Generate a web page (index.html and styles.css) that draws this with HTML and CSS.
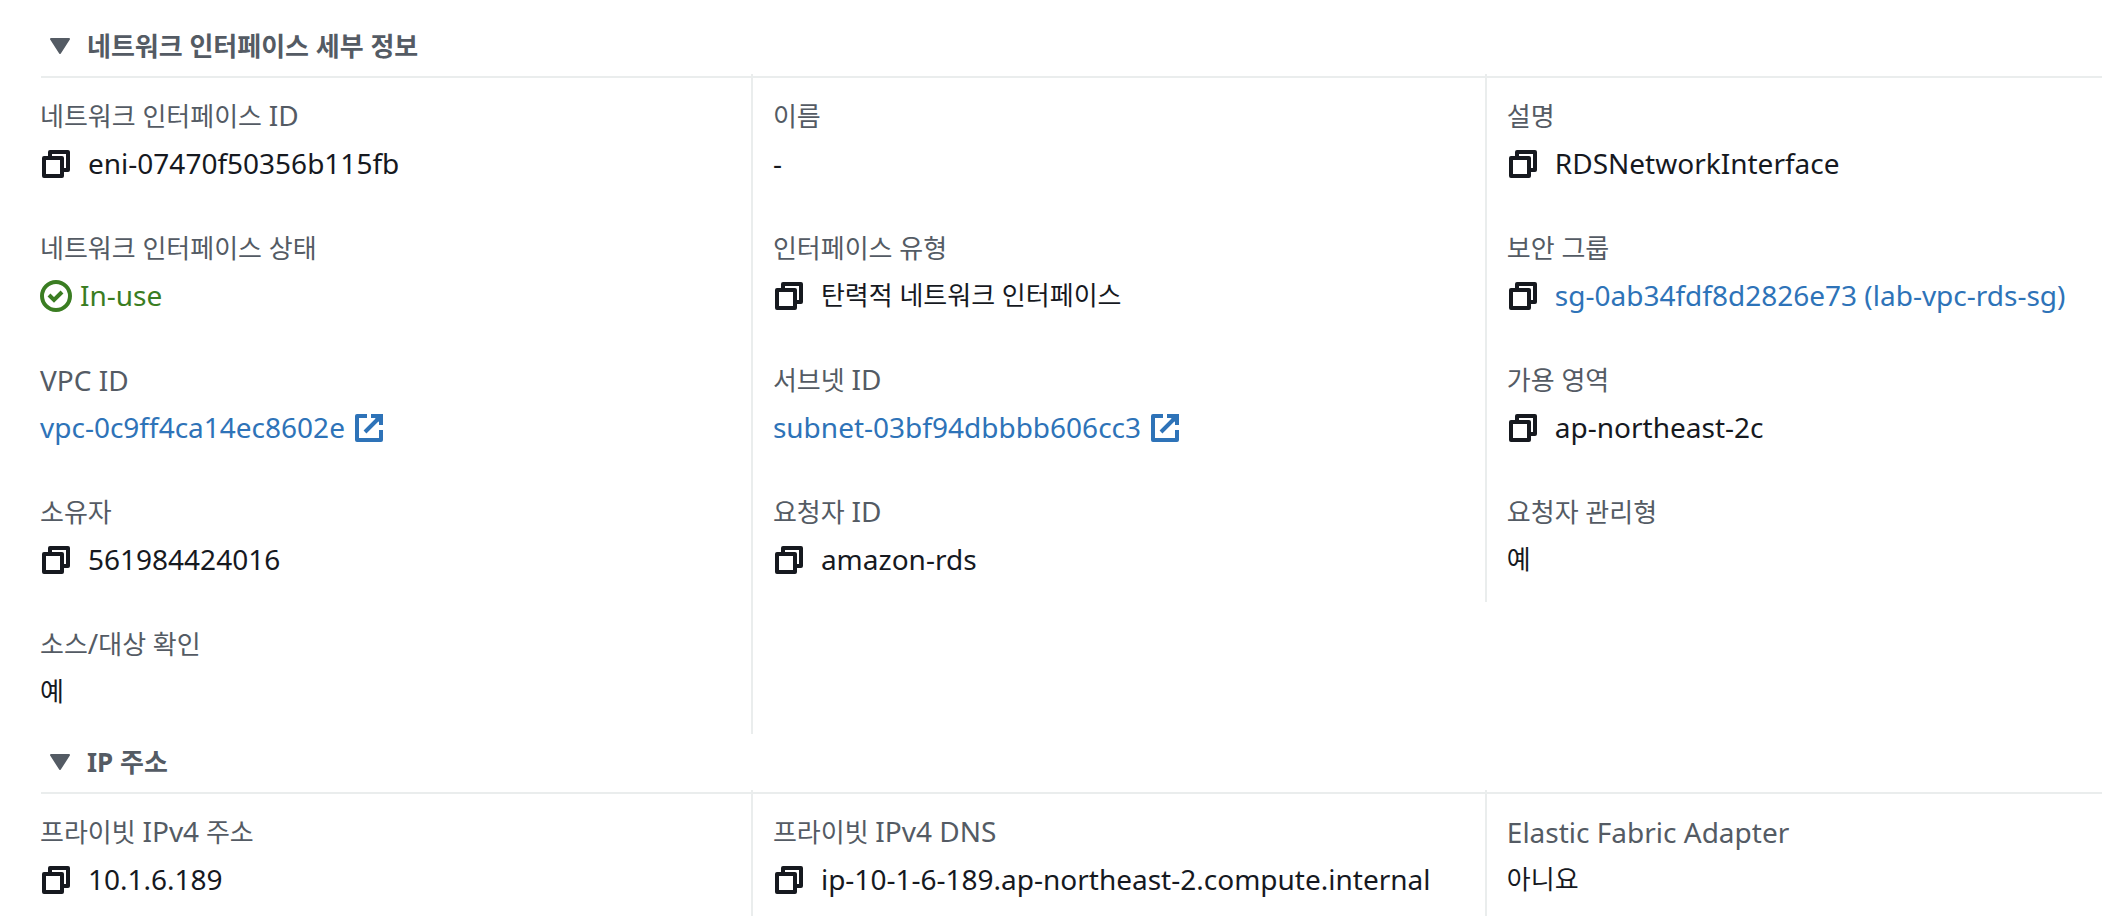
FILE: index.html
```html
<!DOCTYPE html>
<html lang="ko">
<head>
<meta charset="utf-8">
<title>네트워크 인터페이스 세부 정보</title>
<link rel="stylesheet" href="styles.css">
</head>
<body>
<svg class="sprite" aria-hidden="true">
  <symbol id="copy" viewBox="0 0 32 32"><path d="M10 10V4h18v18h-6M4 10h18v18H4z" fill="none" stroke="currentColor" stroke-width="4" stroke-linejoin="round"/></symbol>
  <symbol id="external" viewBox="0 0 32 32"><path d="M14 4H4v24h24V18" fill="none" stroke="currentColor" stroke-width="4" stroke-linejoin="round"/><path d="M18 4h10v9M27 5 12 20" fill="none" stroke="currentColor" stroke-width="4"/><path d="M20 4h8v8z" fill="currentColor"/></symbol>
  <symbol id="check" viewBox="0 0 32 32"><circle cx="16" cy="16" r="14" fill="none" stroke="currentColor" stroke-width="4"/><path d="m9 15 5 5 8-8" fill="none" stroke="currentColor" stroke-width="4"/></symbol>
  <symbol id="caret" viewBox="0 0 20 16"><path d="M1 1h18l-9 14z" fill="currentColor" stroke="currentColor" stroke-width="2" stroke-linejoin="round"/></symbol>
</svg>
<main>
  <section>
    <h2 class="section-head"><button class="toggle" type="button" aria-expanded="true"><svg class="caret"><use href="#caret"/></svg>네트워크 인터페이스 세부 정보</button></h2>
    <div class="columns">
      <dl class="column">
        <div class="item"><dt>네트워크 인터페이스 <span class="latin">ID</span></dt><dd><button class="copy" type="button" aria-label="복사"><svg class="icon"><use href="#copy"/></svg></button>eni-07470f50356b115fb</dd></div>
        <div class="item"><dt>네트워크 인터페이스 상태</dt><dd class="status"><svg class="icon"><use href="#check"/></svg>In-use</dd></div>
        <div class="item"><dt class="latin">VPC ID</dt><dd><a class="external" href="#">vpc-0c9ff4ca14ec8602e<svg class="icon"><use href="#external"/></svg></a></dd></div>
        <div class="item"><dt>소유자</dt><dd><button class="copy" type="button" aria-label="복사"><svg class="icon"><use href="#copy"/></svg></button>561984424016</dd></div>
        <div class="item"><dt>소스<span class="latin">/</span>대상 확인</dt><dd class="hangul">예</dd></div>
      </dl>
      <dl class="column">
        <div class="item"><dt>이름</dt><dd>-</dd></div>
        <div class="item"><dt>인터페이스 유형</dt><dd class="hangul"><button class="copy" type="button" aria-label="복사"><svg class="icon"><use href="#copy"/></svg></button>탄력적 네트워크 인터페이스</dd></div>
        <div class="item"><dt>서브넷 <span class="latin">ID</span></dt><dd><a class="external" href="#">subnet-03bf94dbbbb606cc3<svg class="icon"><use href="#external"/></svg></a></dd></div>
        <div class="item"><dt>요청자 <span class="latin">ID</span></dt><dd><button class="copy" type="button" aria-label="복사"><svg class="icon"><use href="#copy"/></svg></button>amazon-rds</dd></div>
        <div class="item" aria-hidden="true"></div>
      </dl>
      <dl class="column">
        <div class="item"><dt>설명</dt><dd><button class="copy" type="button" aria-label="복사"><svg class="icon"><use href="#copy"/></svg></button>RDSNetworkInterface</dd></div>
        <div class="item"><dt>보안 그룹</dt><dd><button class="copy" type="button" aria-label="복사"><svg class="icon"><use href="#copy"/></svg></button><a href="#">sg-0ab34fdf8d2826e73 (lab-vpc-rds-sg)</a></dd></div>
        <div class="item"><dt>가용 영역</dt><dd><button class="copy" type="button" aria-label="복사"><svg class="icon"><use href="#copy"/></svg></button>ap-northeast-2c</dd></div>
        <div class="item"><dt>요청자 관리형</dt><dd class="hangul">예</dd></div>
      </dl>
    </div>
  </section>
  <section>
    <h2 class="section-head"><button class="toggle" type="button" aria-expanded="true"><svg class="caret"><use href="#caret"/></svg>IP 주소</button></h2>
    <div class="columns">
      <dl class="column">
        <div class="item"><dt>프라이빗 <span class="latin">IPv4</span> 주소</dt><dd><button class="copy" type="button" aria-label="복사"><svg class="icon"><use href="#copy"/></svg></button>10.1.6.189</dd></div>
      </dl>
      <dl class="column">
        <div class="item"><dt>프라이빗 <span class="latin">IPv4 DNS</span></dt><dd><button class="copy" type="button" aria-label="복사"><svg class="icon"><use href="#copy"/></svg></button>ip-10-1-6-189.ap-northeast-2.compute.internal</dd></div>
      </dl>
      <dl class="column">
        <div class="item"><dt class="latin">Elastic Fabric Adapter</dt><dd class="hangul">아니요</dd></div>
      </dl>
    </div>
  </section>
</main>
</body>
</html>
```

FILE: styles.css
```css
* { box-sizing: border-box; }

html { overflow: hidden; }

body {
  margin: 0;
  padding-top: 18px;
  background: #fff;
  color: #16191f;
  font-family: "Noto Sans", "Noto Sans CJK KR", sans-serif;
  font-size: 28px;
  line-height: 44px;
}

.sprite { display: none; }

.section-head {
  margin: 0 0 0 41px;
  height: 60px;
  border-bottom: 2px solid #eaeded;
}

.toggle {
  display: flex;
  align-items: center;
  gap: 17px;
  height: 56px;
  padding: 0 9px;
  border: 0;
  background: none;
  color: #545b64;
  font: inherit;
  font-size: 26px;
  font-weight: 700;
}

.caret { width: 20px; height: 16px; }

.columns {
  display: grid;
  grid-template-columns: 35.2% 35.2% 1fr;
  align-items: start;
  margin-top: -4px;
  padding-left: 17px;
}

.column {
  margin: 0;
  padding-left: 20px;
  border-left: 2px solid #eaeded;
}

.column:first-child {
  padding-left: 23px;
  border-left: 0;
}

.item {
  height: 132px;
  padding-top: 20px;
  white-space: nowrap;
}

dt {
  height: 44px;
  margin-bottom: 3px;
  color: #545b64;
  font-size: 26px;
}

dd {
  display: flex;
  align-items: center;
  height: 44px;
  margin: 0;
}

.latin {
  font-size: 28px;
  line-height: 1;
}

dt.latin { line-height: 44px; }

.hangul { font-size: 26px; }

.icon {
  display: block;
  flex: none;
  width: 32px;
  height: 32px;
  margin-top: 2px;
}

.copy {
  margin: 0 16px 0 0;
  padding: 0;
  border: 0;
  background: none;
  color: inherit;
}

.status { gap: 8px; color: #3a7d22; }

a { color: #2e73b8; text-decoration: none; }

.external { display: flex; align-items: center; gap: 8px; }
```
